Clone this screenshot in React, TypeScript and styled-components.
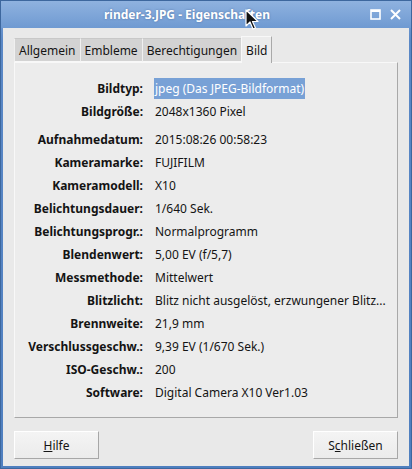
import React from "react";
import styled, { createGlobalStyle } from "styled-components";

const Global = createGlobalStyle`
  html, body { margin: 0; padding: 0; background: #4f7fbf; }
  * { box-sizing: border-box; }
`;

const Window = styled.div`
  position: relative;
  width: 412px;
  height: 469px;
  display: flex;
  flex-direction: column;
  background: linear-gradient(#86abdc, #5a88c6 40px, #4f7fbf);
  border: 1px solid #3d679e;
  font-family: "Noto Sans", "Open Sans", sans-serif;
  font-size: 12px;
  color: #141414;
  overflow: hidden;
`;

const TitleBar = styled.div`
  height: 27px;
  flex: none;
  display: flex;
  align-items: center;
  position: relative;
  padding-right: 38px;
  background: linear-gradient(#8fb2df, #6f9ad2);
`;

const Title = styled.div`
  flex: 1;
  text-align: center;
  color: #ffffff;
  font-weight: bold;
  font-size: 12px;
  text-shadow: 0 0 2px rgba(30, 60, 110, 0.5);
`;

const Controls = styled.div`
  position: absolute;
  right: 10px;
  top: 8px;
  display: flex;
  gap: 9px;
  align-items: center;
`;

const Body = styled.div`
  flex: 1;
  margin: 0 2px 3px 2px;
  background: #e9e9e9;
  padding: 9px 11px 7px 11px;
  display: flex;
  flex-direction: column;
`;

const TabRow = styled.div`
  display: flex;
  align-items: flex-end;
  height: 25px;
  position: relative;
  z-index: 1;
`;

const Tab = styled.div<{ $active?: boolean }>`
  height: ${(p) => (p.$active ? "27px" : "24px")};
  margin-bottom: ${(p) => (p.$active ? "-1px" : "0")};
  padding: 0 4px;
  display: flex;
  align-items: center;
  background: ${(p) => (p.$active ? "#ececec" : "#d3d3d3")};
  border: 1px solid #a9a9a9;
  border-top-color: ${(p) => (p.$active ? "#f8f8f8" : "#c8c8c8")};
  border-left-color: ${(p) => (p.$active ? "#f8f8f8" : "#f0f0f0")};
  border-bottom: ${(p) => (p.$active ? "none" : "1px solid #f8f8f8")};
  margin-left: -1px;
  font-size: 12px;
  color: #141414;
  &:first-child { margin-left: 0; }
`;

const Panel = styled.div`
  height: 356px;
  flex: none;
  background: #ececec;
  border: 1px solid #a8a8a8;
  border-top-color: #f8f8f8;
  border-left-color: #f8f8f8;
  padding: 14px 0 0 0;
`;

const Grid = styled.div`
  display: grid;
  grid-template-columns: 128px 1fr;
  column-gap: 12px;
  font-size: 12px;
`;

const Label = styled.div<{ $gap?: boolean }>`
  height: 23px;
  display: flex;
  align-items: center;
  justify-content: flex-end;
  font-weight: bold;
  white-space: nowrap;
  margin-top: ${(p) => (p.$gap ? "5px" : "0")};
`;

const Value = styled.div<{ $gap?: boolean }>`
  height: 23px;
  display: flex;
  align-items: center;
  white-space: nowrap;
  margin-top: ${(p) => (p.$gap ? "5px" : "0")};
`;

const Selected = styled.span`
  background: #78a1d6;
  color: #ffffff;
  padding: 2px 1px 2px 1px;
  margin-left: -1px;
`;

const Footer = styled.div`
  display: flex;
  justify-content: space-between;
  margin-top: 13px;
`;

const Button = styled.div`
  width: 85px;
  height: 28px;
  display: flex;
  align-items: center;
  justify-content: center;
  background: linear-gradient(#f4f4f4, #ebebeb);
  border: 1px solid #a7a7a7;
  border-top-color: #ffffff;
  border-left-color: #ffffff;
  font-size: 12px;
  color: #141414;
`;

const U = styled.span`
  text-decoration: underline;
`;

const Cursor = styled.svg`
  position: absolute;
  left: 244px;
  top: 8px;
`;

const rows: [string, React.ReactNode, boolean?][] = [
  ["Bildtyp:", <Selected>jpeg (Das JPEG-Bildformat)</Selected>],
  ["Bildgröße:", "2048x1360 Pixel"],
  ["Aufnahmedatum:", "2015:08:26 00:58:23", true],
  ["Kameramarke:", "FUJIFILM"],
  ["Kameramodell:", "X10"],
  ["Belichtungsdauer:", "1/640 Sek."],
  ["Belichtungsprogr.:", "Normalprogramm"],
  ["Blendenwert:", "5,00 EV (f/5,7)"],
  ["Messmethode:", "Mittelwert"],
  ["Blitzlicht:", "Blitz nicht ausgelöst, erzwungener Blitz..."],
  ["Brennweite:", "21,9 mm"],
  ["Verschlussgeschw.:", "9,39 EV (1/670 Sek.)"],
  ["ISO-Geschw.:", "200"],
  ["Software:", "Digital Camera X10 Ver1.03"],
];

export default function App() {
  return (
    <>
      <Global />
      <Window>
        <TitleBar>
          <Title>rinder-3.JPG - Eigenschaften</Title>
          <Controls>
            <svg width="11" height="11" viewBox="0 0 11 11">
              <rect x="1" y="1" width="9" height="9" fill="none" stroke="#fff" strokeWidth="1.6" />
              <rect x="1" y="1" width="9" height="2" fill="#fff" />
            </svg>
            <svg width="11" height="11" viewBox="0 0 11 11">
              <path d="M1 1 L10 10 M10 1 L1 10" stroke="#fff" strokeWidth="2" />
            </svg>
          </Controls>
        </TitleBar>
        <Body>
          <TabRow>
            <Tab>Allgemein</Tab>
            <Tab>Embleme</Tab>
            <Tab>Berechtigungen</Tab>
            <Tab $active>Bild</Tab>
          </TabRow>
          <Panel>
            <Grid>
              {rows.map(([l, v, g], i) => (
                <React.Fragment key={i}>
                  <Label $gap={g}>{l}</Label>
                  <Value $gap={g}>{v}</Value>
                </React.Fragment>
              ))}
            </Grid>
          </Panel>
          <Footer>
            <Button>
              <U>H</U>ilfe
            </Button>
            <Button>
              S<U>c</U>hließen
            </Button>
          </Footer>
        </Body>
        <Cursor width="14" height="22" viewBox="0 0 14 22">
          <path d="M1 1 L1 17 L5 13 L8 20 L10.5 19 L7.5 12.5 L13 12.5 Z" fill="#111" stroke="#fff" strokeWidth="1.2" strokeLinejoin="round" />
        </Cursor>
      </Window>
    </>
  );
}
